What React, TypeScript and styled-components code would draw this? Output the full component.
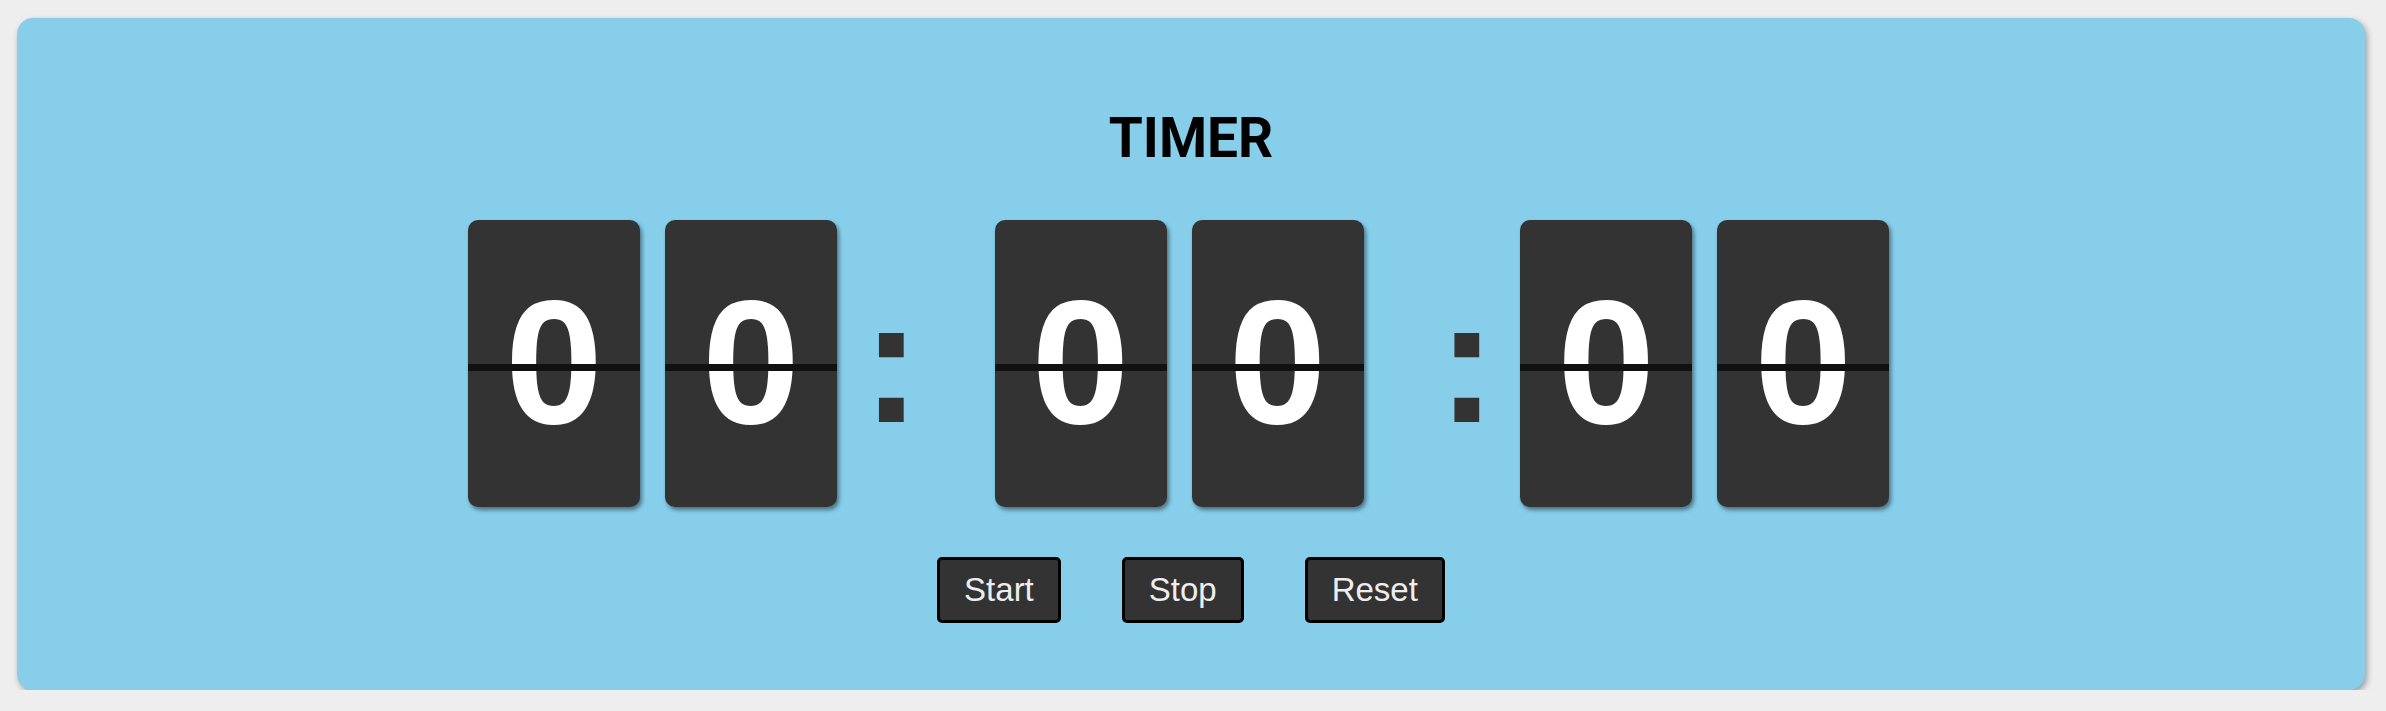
import React from "react";
import styled, { createGlobalStyle } from "styled-components";

const GlobalStyle = createGlobalStyle`
  html, body {
    margin: 0;
    padding: 0;
    background: #eeeeee;
  }
  body {
    font-family: "Liberation Sans", Arial, sans-serif;
  }
`;

const Panel = styled.main`
  margin: 18px 21px 0 17px;
  height: 672px;
  box-sizing: border-box;
  background: #87ceeb;
  border-radius: 16px;
  box-shadow: 2px 3px 6px rgba(0, 0, 0, 0.35);
  display: flex;
  flex-direction: column;
  align-items: center;
  padding-top: 87px;
`;

const Title = styled.h1`
  margin: 0;
  font-family: Roboto, "Liberation Sans", sans-serif;
  font-weight: 700;
  font-size: 55px;
  line-height: 66px;
  color: #000;
`;

const ClockRow = styled.div`
  margin-top: 49px;
  display: flex;
  align-items: center;
  justify-content: center;
`;

const DigitCard = styled.div`
  position: relative;
  width: 172px;
  height: 287px;
  box-sizing: border-box;
  padding-bottom: 4px;
  margin-right: 25px;
  background: #333333;
  border-radius: 10px;
  box-shadow: 2px 3px 4px rgba(0, 0, 0, 0.45);
  display: flex;
  align-items: center;
  justify-content: center;
  color: #ffffff;
  font-family: "Liberation Sans", Arial, sans-serif;
  font-weight: 700;
  font-size: 176px;

  &::after {
    content: "";
    position: absolute;
    left: 0;
    right: 0;
    top: 50%;
    height: 7px;
    background: #111111;
  }
`;

const Colon = styled.span<{ $before: number; $after: number }>`
  margin-left: ${(p) => p.$before}px;
  margin-right: ${(p) => p.$after}px;
  margin-bottom: 5px;
  color: #333333;
  font-family: "Liberation Sans", Arial, sans-serif;
  font-weight: 700;
  font-size: 176px;
`;

const Controls = styled.div`
  margin-top: 50px;
  display: flex;
  gap: 61px;
`;

const ControlButton = styled.button`
  background: #333333;
  color: #eeeeee;
  border: 3px solid #000000;
  border-radius: 5px;
  padding: 11px 24px;
  font-family: "Liberation Sans", Arial, sans-serif;
  font-size: 33px;
  line-height: normal;
  cursor: pointer;
`;

const Digit: React.FC<{ value: string }> = ({ value }) => <DigitCard>{value}</DigitCard>;

export default function App() {
  return (
    <>
      <GlobalStyle />
      <Panel>
        <Title>TIMER</Title>
        <ClockRow>
          <Digit value="0" />
          <Digit value="0" />
          <Colon $before={0} $after={74}>:</Colon>
          <Digit value="0" />
          <Digit value="0" />
          <Colon $before={49} $after={24}>:</Colon>
          <Digit value="0" />
          <Digit value="0" />
        </ClockRow>
        <Controls>
          <ControlButton>Start</ControlButton>
          <ControlButton>Stop</ControlButton>
          <ControlButton>Reset</ControlButton>
        </Controls>
      </Panel>
    </>
  );
}
